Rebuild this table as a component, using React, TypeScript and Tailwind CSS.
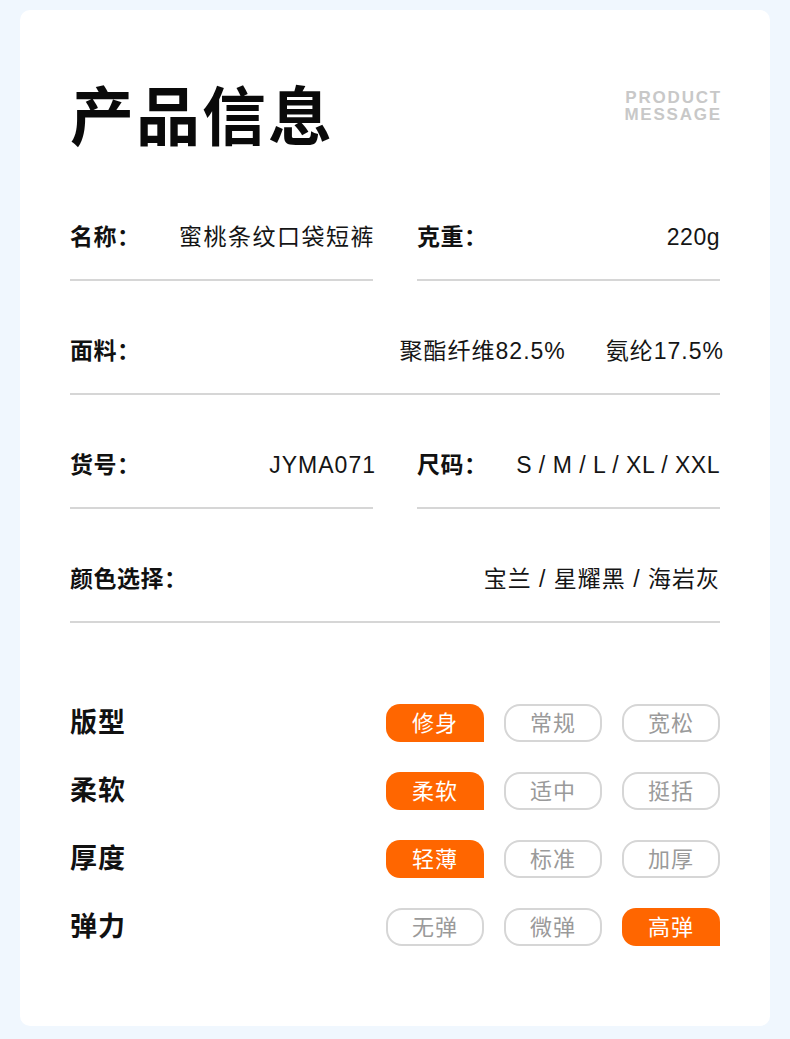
const font = { fontFamily: '"Liberation Sans", "Noto Sans CJK SC", sans-serif' }

type Attr = { label: string; options: string[]; active: number }

const attrs: Attr[] = [
  { label: '版型', options: ['修身', '常规', '宽松'], active: 0 },
  { label: '柔软', options: ['柔软', '适中', '挺括'], active: 0 },
  { label: '厚度', options: ['轻薄', '标准', '加厚'], active: 0 },
  { label: '弹力', options: ['无弹', '微弹', '高弹'], active: 2 },
]

function InfoCell({ label, children }: { label: string; children: React.ReactNode }) {
  return (
    <div className="flex items-center justify-between border-b-2 border-[#d6d6d6] pt-[55px] pb-[27px]">
      <span className="text-[23px] leading-[30px] font-bold text-[#111] tracking-[0.5px]">{label}</span>
      <span className="flex items-center text-[23px] leading-[30px] text-[#151515]">{children}</span>
    </div>
  )
}

export default function App() {
  return (
    <div className="min-h-[1039px] bg-[#f0f7fe] pt-[10px] pb-[14px] px-[20px]" style={font}>
      <div className="bg-white rounded-[10px] px-[50px] pt-[76px] pb-[80px]">
        {/* Header */}
        <div className="flex items-start justify-between pb-[17px]">
          <h1 className="text-[64px] leading-[64px] font-bold text-[#0a0a0a] tracking-[2px]">产品信息</h1>
          <div className="text-right text-[17px] leading-[17px] font-bold text-[#c8c8c8] tracking-[1.8px] -mr-[2px] mt-[3px]">
            <div>PRODUCT</div>
            <div>MESSAGE</div>
          </div>
        </div>

        {/* Info rows */}
        <div className="grid grid-cols-2 gap-x-[44px]">
          <InfoCell label="名称：">
            <span className="tracking-[1.5px] -mr-[2px]">蜜桃条纹口袋短裤</span>
          </InfoCell>
          <InfoCell label="克重：">
            <span className="tracking-[0.5px]">220g</span>
          </InfoCell>
        </div>
        <InfoCell label="面料：">
          <span className="flex gap-[40px] tracking-[1px] -mr-[4px]">
            <span>聚酯纤维82.5%</span>
            <span>氨纶17.5%</span>
          </span>
        </InfoCell>
        <div className="grid grid-cols-2 gap-x-[44px]">
          <InfoCell label="货号：">
            <span className="tracking-[1px] -mr-[3px]">JYMA071</span>
          </InfoCell>
          <InfoCell label="尺码：">
            <span className="tracking-[0.5px]">S / M / L / XL / XXL</span>
          </InfoCell>
        </div>
        <InfoCell label="颜色选择：">
          <span className="tracking-[1px]">宝兰 / 星耀黑 / 海岩灰</span>
        </InfoCell>

        {/* Attribute tags */}
        <div className="mt-[81px] flex flex-col gap-[30px]">
          {attrs.map((a) => (
            <div key={a.label} className="flex items-center justify-between">
              <span className="text-[27px] leading-[38px] font-bold text-[#111] tracking-[1px]">{a.label}</span>
              <div className="flex gap-[20px]">
                {a.options.map((o, i) =>
                  i === a.active ? (
                    <div
                      key={o}
                      className="w-[98px] h-[38px] flex items-center justify-center rounded-tl-[14px] rounded-tr-[14px] rounded-bl-[14px] bg-[#ff6600] text-white text-[22px] tracking-[1px]"
                    >
                      {o}
                    </div>
                  ) : (
                    <div
                      key={o}
                      className="w-[98px] h-[38px] flex items-center justify-center rounded-[16px] border-2 border-[#d6d6d6] text-[#9a9a9a] text-[22px] tracking-[1px]"
                    >
                      {o}
                    </div>
                  )
                )}
              </div>
            </div>
          ))}
        </div>
      </div>
    </div>
  )
}
